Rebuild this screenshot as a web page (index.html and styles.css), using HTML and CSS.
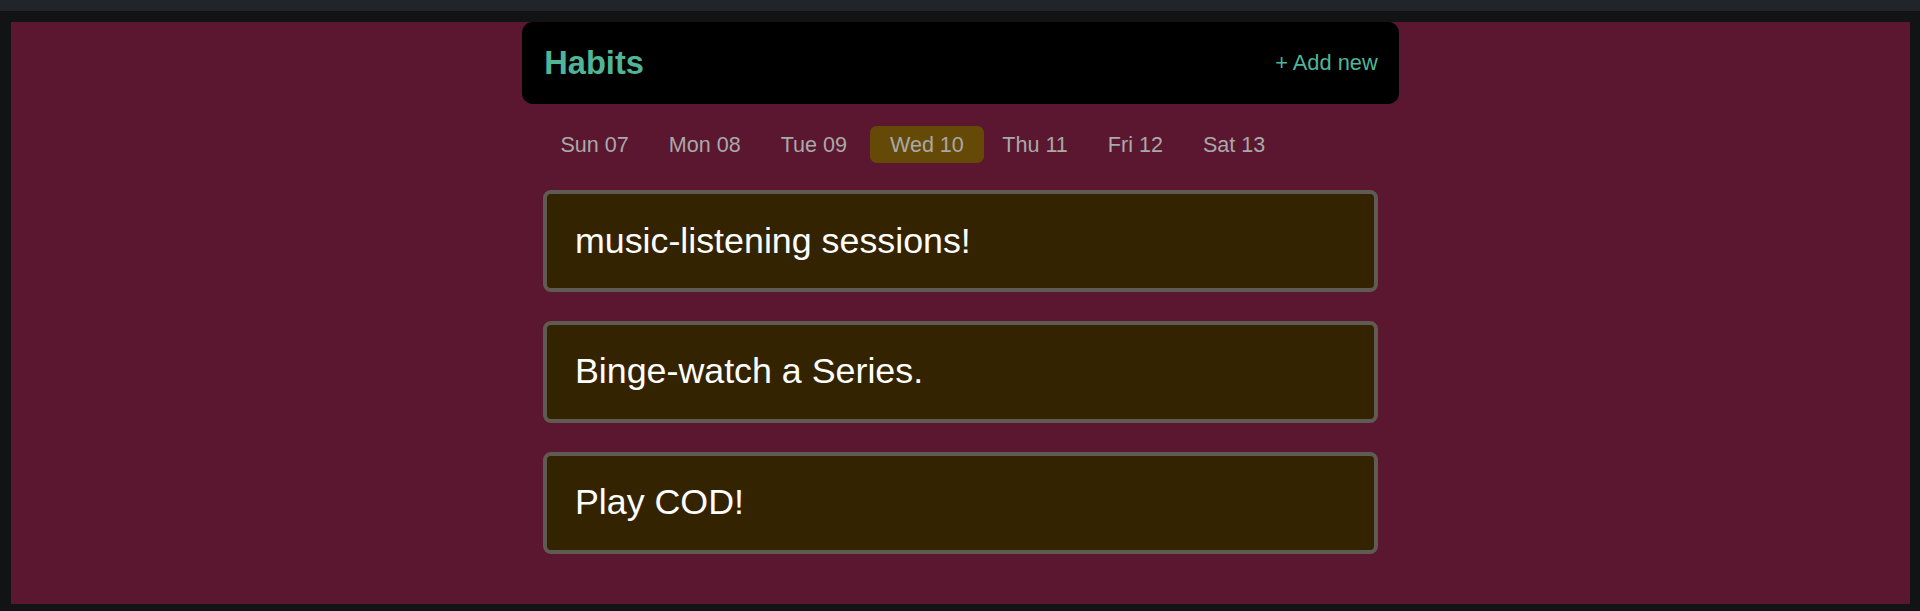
FILE: index.html
```html
<!DOCTYPE html>
<html lang="en">
<head>
<meta charset="utf-8">
<title>Habits</title>
<link rel="stylesheet" href="styles.css">
</head>
<body>
<div class="topbar"></div>
<div class="frame">
  <div class="app">
    <header class="header">
      <h1 class="title">Habits</h1>
      <a class="add" href="#">+ Add new</a>
    </header>
    <nav class="days">
      <span class="day">Sun 07</span>
      <span class="day">Mon 08</span>
      <span class="day">Tue 09</span>
      <span class="day day-active">Wed 10</span>
      <span class="day">Thu 11</span>
      <span class="day">Fri 12</span>
      <span class="day">Sat 13</span>
    </nav>
    <ul class="habits">
      <li class="habit">music-listening sessions!</li>
      <li class="habit">Binge-watch a Series.</li>
      <li class="habit">Play COD!</li>
    </ul>
  </div>
</div>
</body>
</html>
```
FILE: styles.css
```css
* { box-sizing: border-box; }

html, body {
  margin: 0;
  padding: 0;
  height: 611px;
  overflow: hidden;
}

body {
  background: #121314;
  font-family: "Liberation Sans", Arial, sans-serif;
}

.topbar {
  height: 11px;
  background: #212529;
}

.frame {
  margin: 11px 10px 7px 11px;
  height: 582px;
  background: #5a172f;
}

.app {
  width: 877px;
  margin: 0 auto;
}

.header {
  height: 82px;
  padding: 0 21.33px 0 22.3px;
  background: #000;
  border-radius: 10.67px;
  display: flex;
  align-items: center;
  justify-content: space-between;
}

.title {
  margin: 0;
  font-size: 32.6px;
  font-weight: bold;
  color: #50b596;
}

.add {
  font-size: 21.8px;
  color: #50b596;
  text-decoration: none;
}

.days {
  display: flex;
  margin-top: 22.3px;
  padding-left: 18.5px;
}

.day {
  padding: 5.3px 20px;
  font-size: 21.55px;
  color: #a9a9a9;
  border-radius: 6.67px;
}

.day-active {
  margin: 0 -1.5px 0 3px;
  background: #654a07;
}

.habits {
  list-style: none;
  margin: 27.3px 0 0;
  padding: 0 21.33px;
  display: flex;
  flex-direction: column;
  gap: 29px;
}

.habit {
  border: 4px solid #5f5b52;
  border-radius: 8px;
  background: #332300;
  color: #fff;
  font-size: 35.8px;
  padding: 26.4px 26.67px 26.4px 27.6px;
  line-height: normal;
}
```
